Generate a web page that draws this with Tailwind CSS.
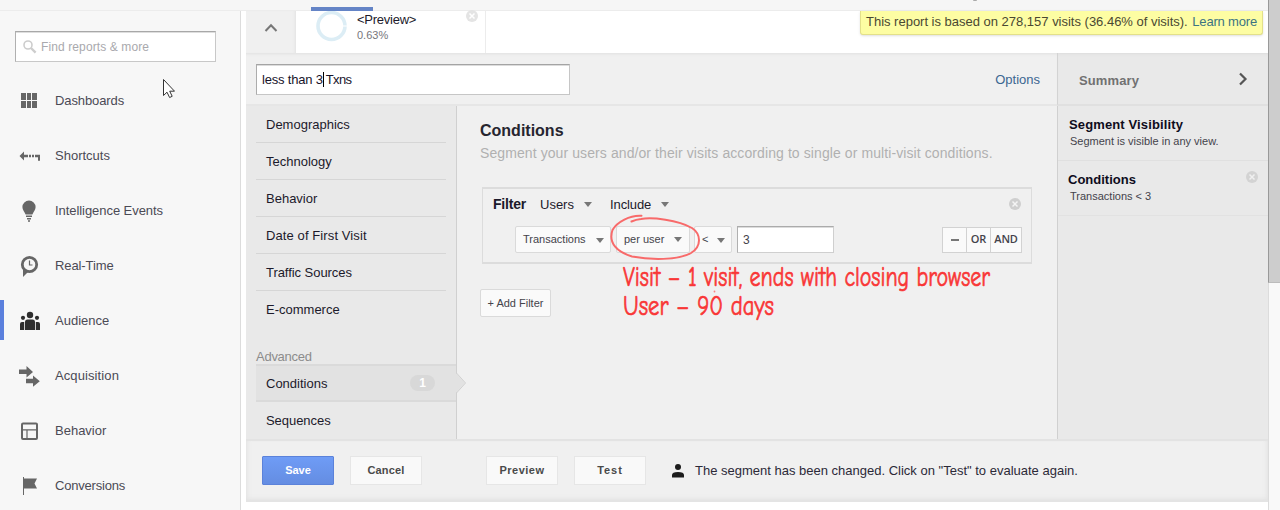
<!DOCTYPE html>
<html lang="en">
<head>
<meta charset="utf-8">
<title>Audience segments</title>
<script src="https://cdn.jsdelivr.net/npm/@tailwindcss/browser@4"></script>
</head>
<body class="relative flex h-[510px] w-[1280px] flex-col overflow-hidden bg-white font-['Liberation_Sans',Arial,sans-serif] text-[13px] leading-4 text-[#1c1a2b]">

<!-- top bar -->
<header class="flex h-[11px] w-[1268px] shrink-0 items-end border-b border-[#ececec] bg-[#f6f6f6] pl-[311px]">
  <div class="-mb-px h-1 w-[62px] bg-[#6484c6]"></div>
  <div class="mb-[9px] ml-[600px] h-px w-1 rounded-b-full bg-[#aaa]"></div>
</header>

<div class="flex min-h-0 flex-1">
  <!-- sidebar -->
  <aside class="flex w-[241px] shrink-0 flex-col border-r border-[#dcdcdc] bg-[#f7f7f7] text-[#4b4a55]">
    <div class="mt-5 ml-[15px] flex h-[31px] w-[201px] shrink-0 items-center gap-[5px] border border-[#c8c8c8] border-t-[#a8a8a8] border-l-[#b0b0b0] bg-white pl-[7px] text-xs tracking-[0.11px] text-[#a9a9ad] shadow-[inset_0_1px_0_#dedede]">
      <svg class="size-[14px]" viewBox="0 0 14 14" fill="none" stroke="#cdcdcd"><circle cx="5" cy="5" r="4" stroke-width="1.6"/><path d="M8 8l4.6 4.6" stroke-width="2.4"/></svg>
      <span class="-ml-px">Find reports &amp; more</span>
    </div>
    <nav class="mt-[11px] flex flex-col">
      <a class="flex h-[55px] items-center pl-[19px] tracking-[-0.1px]"><svg class="mr-4 size-5" viewBox="0 0 20 20" fill="#666"><path d="M2 2h5v7H2zM8 2h4v7H8zM13 2h5v7h-5zM2 10h5v7H2zM8 10h4v7H8zM13 10h5v7h-5z"/></svg>Dashboards</a>
      <a class="flex h-[55px] items-center pl-[19px]"><svg class="mr-4 size-5 overflow-visible" viewBox="0 0 20 20" fill="#666"><path d="M0.5 10L5 5.500v3.200h4v2.600H5v3.200zM10 8.700h2v2.600h-2zM13 8.700h2v2.600h-2zM16 8.700h5v6h-2v-3.400h-3z"/></svg>Shortcuts</a>
      <a class="flex h-[55px] items-center pl-[19px] tracking-[-0.06px]"><svg class="mr-4 size-5 overflow-visible" viewBox="0 0 20 20" fill="#666"><path d="M10-.5a6.600 6.600 0 0 1 6.600 6.600c0 3-2 4.500-3.200 7.400H6.600C5.400 10.600 3.400 9.100 3.400 6.100A6.600 6.600 0 0 1 10-.5zM7 14.500h6v1.500H7zM8 17h4v1.500H8zM9 19.200h2v1.500H9z"/></svg>Intelligence Events</a>
      <a class="flex h-[55px] items-center pl-[19px] tracking-[-0.1px]"><svg class="mr-4 size-5 overflow-visible" viewBox="0 0 20 20"><circle cx="10.500" cy="8.500" r="7.200" fill="none" stroke="#666" stroke-width="2.800"/><path d="M4 12v9l5-5z" fill="#666"/><path d="M10.500 4.500V9H13.500" fill="none" stroke="#666" stroke-width="1.200"/></svg>Real-Time</a>
      <a class="relative flex h-[55px] items-center pl-[19px]"><i class="absolute top-[7px] left-0 h-10 w-1 bg-[#5b80dd]"></i><svg class="mr-4 size-5 overflow-visible" viewBox="0 0 20 20" fill="#2e2e2e"><circle cx="11" cy="4" r="3.200"/><circle cx="4" cy="6.800" r="2.100"/><circle cx="18" cy="6.800" r="2.100"/><path d="M6 19v-8q0-2.500 2.500-2.500h5q2.500 0 2.500 2.500v8zM1 19v-6q0-2 2-2h2.200v8zM16.800 19v-8H19q2 0 2 2v6z"/></svg>Audience</a>
      <a class="flex h-[55px] items-center pl-[19px] tracking-[0.1px]"><svg class="mr-4 size-5 overflow-visible" viewBox="0 0 20 20" fill="#666"><path d="M0 3.500h7.500V0L14 6l-6.500 5.500V8H0zM7 12.800h7V9.500l6.800 5.700-6.800 5.600v-3.600H7z"/></svg>Acquisition</a>
      <a class="flex h-[55px] items-center pl-[19px]"><svg class="mr-4 size-5" viewBox="0 0 20 20" fill="none" stroke="#666"><rect x="3" y="2.500" width="15" height="15.500" rx="1" stroke-width="2"/><path d="M3 8.800h15M8 8.800v9" stroke-width="1.200"/></svg>Behavior</a>
      <a class="flex h-[55px] items-center pl-[19px] tracking-[-0.2px]"><svg class="mr-4 size-5" viewBox="0 0 20 20" fill="#666"><path d="M4 1h1v1.500h13L15.500 7.500 18 12.500H5V19H4z"/></svg>Conversions</a>
    </nav>
  </aside>

  <main class="ml-[5px] flex w-[1022px] shrink-0 flex-col">
    <!-- segment strip -->
    <div class="flex h-[42px] shrink-0">
      <div class="flex w-[50px] justify-center bg-[#f0f0f0] pt-[11px] shadow-[inset_-3px_0_3px_-2px_#e2e2e2]">
        <svg class="h-3 w-[14px]" viewBox="0 0 14 12" fill="none" stroke="#777" stroke-width="2"><path d="M1.500 9L7 3.200 12.500 9"/></svg>
      </div>
      <div class="flex w-[190px] border-r border-[#ececec] pl-5">
        <svg class="h-[33px] w-[31px]" viewBox="0 0 31 33" fill="none"><circle cx="15.500" cy="15" r="13.500" stroke="#dcedf5" stroke-width="3.600"/><path d="M26 15h5" stroke="#fff"/></svg>
        <div class="ml-[10px] w-[109px] leading-[15px]"><div class="mt-px tracking-[-0.25px]">&lt;Preview&gt;</div><div class="mt-px text-[11px] text-[#77767c]">0.63%</div></div>
        <svg class="-mt-px size-3" viewBox="0 0 12 12"><circle cx="6" cy="6" r="6" fill="#e4e4e4"/><path d="M3.500 3.500l5 5M8.500 3.500l-5 5" stroke="#fff" stroke-width="1.500"/></svg>
      </div>
      <div class="ml-auto mr-[5px] flex h-6 w-[403px] items-center justify-between whitespace-nowrap rounded-b-[3px] border border-t-0 border-[#e3e08a] bg-[#fdfda3] px-[5px] pb-[2px] text-[#4a4832] shadow-sm">
        <span class="tracking-[-0.01px]">This report is based on 278,157 visits (36.46% of visits).</span><span class="tracking-[-0.18px] text-[#3c7482]">Learn more</span>
      </div>
    </div>

    <!-- segment editor -->
    <section class="flex h-[449px] shrink-0 flex-col border-b-2 border-[#e4e4e4] bg-[#f0f0f0]">
      <div class="flex h-[53px] shrink-0">
        <div class="flex w-[812px] items-center justify-between border-r border-b-2 border-[#e6e6e6] border-r-[#d3d3d3] pt-px pr-[17px] pl-[10px] shadow-[inset_0_3px_3px_-2px_#e0e0e0]">
          <div class="flex h-[31px] w-[314px] items-center border border-[#c6c6c6] border-t-[#a4a4a4] border-l-[#acacac] bg-white pl-[5px] text-[#17142a] shadow-[inset_0_1px_0_#dcdcdc]">
            <span class="pt-px tracking-[-0.2px]">less than 3</span><i class="mr-[2px] h-[15px] w-px bg-black"></i><span class="pt-px tracking-[-0.6px]">Txns</span>
          </div>
          <a class="pt-px text-[#3b6690]">Options</a>
        </div>
        <div class="flex flex-1 items-center justify-between border-b-2 border-[#e0e0e0] bg-[#e9e9e9] pr-5 pl-[21px] font-bold tracking-[0.13px] text-[#717171] shadow-[inset_0_3px_3px_-2px_#dcdcdc]">
          <span class="pt-[4px]">Summary</span>
          <svg class="h-[14px] w-[10px]" viewBox="0 0 10 14" fill="none" stroke="#555" stroke-width="2.200"><path d="M2 1.500L7.500 7 2 12.500"/></svg>
        </div>
      </div>

      <div class="flex h-[333px] shrink-0">
        <!-- dimensions -->
        <nav class="flex w-[211px] flex-col border-r border-[#d0d0d0] bg-[#e9e9e9] pl-[10px]">
          <a class="mr-[10px] flex h-[37px] items-center border-b border-[#d6d6d6] pt-[2px] pl-[10px]">Demographics</a>
          <a class="mr-[10px] flex h-[37px] items-center border-b border-[#d6d6d6] pt-[2px] pl-[10px]">Technology</a>
          <a class="mr-[10px] flex h-[37px] items-center border-b border-[#d6d6d6] pt-[2px] pl-[10px]">Behavior</a>
          <a class="mr-[10px] flex h-[37px] items-center border-b border-[#d6d6d6] pt-[2px] pl-[10px] tracking-[0.1px]">Date of First Visit</a>
          <a class="mr-[10px] flex h-[37px] items-center border-b border-[#d6d6d6] pt-[2px] pl-[10px] tracking-[-0.05px]">Traffic Sources</a>
          <a class="flex h-[37px] items-center pl-[10px]">E-commerce</a>
          <div class="mt-[21px] h-[15px] tracking-[-0.26px] text-[#8c8c8c]">Advanced</div>
          <a class="relative flex h-[38px] items-center justify-between border-y-2 border-[#dadada] bg-[#e2e2e2] pr-[21px] pl-[10px]"><span class="pt-[2px]">Conditions</span>
            <span class="flex h-4 w-[25px] items-center justify-center rounded-full bg-[#d8d8d8] text-xs font-bold text-white">1</span>
            <svg class="absolute top-[7px] -right-[10px] h-5 w-[10px]" viewBox="0 0 10 20"><path d="M0 0l9 10-9 10z" fill="#e2e2e2"/><path d="M.5 0l9 10-9 10" fill="none" stroke="#d0d0d0"/></svg>
          </a>
          <a class="flex h-[37px] items-center pl-[10px] tracking-[-0.05px]">Sequences</a>
        </nav>

        <!-- conditions -->
        <div class="flex w-[601px] flex-col items-start border-r border-[#d0d0d0] pt-[15px] pl-[23px]">
          <h2 class="text-base leading-[19px] font-bold text-[#26252f]">Conditions</h2>
          <p class="mt-[4px] whitespace-nowrap text-sm leading-[18px] tracking-[0.09px] text-[#b0b0b0]">Segment your users and/or their visits according to single or multi-visit conditions.</p>
          <div class="mt-[25px] ml-[2px] h-[77px] w-[550px] border-2 border-[#dcdcdc] border-r-[1px] border-l">
            <div class="mt-[7px] flex h-4 items-center pr-[10px] pl-[10px]">
              <b class="w-[47px] text-sm tracking-[-0.2px]">Filter</b>
              <span class="w-11 pt-[2px]">Users</span><i class="mr-[18px] border-x-4 border-t-[5px] border-x-transparent border-t-[#777]"></i>
              <span class="w-[51px] pt-[2px] tracking-[-0.1px]">Include</span><i class="border-x-4 border-t-[5px] border-x-transparent border-t-[#777]"></i>
              <svg class="ml-auto size-3" viewBox="0 0 12 12"><circle cx="6" cy="6" r="6" fill="#cfcfcf"/><path d="M3.500 3.500l5 5M8.500 3.500l-5 5" stroke="#f4f4f4" stroke-width="1.500"/></svg>
            </div>
            <div class="mt-[14px] flex h-[27px] items-center pr-[9px] pl-8 text-[11px] text-[#44434b]">
              <span class="flex h-[27px] w-[96px] items-center justify-between rounded-[2px] border border-[#dadada] bg-[#fafafa] px-[7px] pb-px">Transactions<i class="mt-[3px] -mr-px border-x-4 border-t-[5px] border-x-transparent border-t-[#777]"></i></span>
              <span class="ml-[5px] flex h-[27px] w-[74px] items-center justify-between rounded-[2px] border border-[#dadada] bg-[#fafafa] px-[7px] pb-px">per user<i class="border-x-4 border-t-[5px] border-x-transparent border-t-[#777]"></i></span>
              <span class="ml-[4px] flex h-[27px] w-[38px] items-center justify-between rounded-[2px] border border-[#dadada] bg-[#fafafa] px-[7px] pr-[6px] pb-px">&lt;<i class="mt-[2px] border-x-4 border-t-[5px] border-x-transparent border-t-[#777]"></i></span>
              <span class="ml-[5px] flex h-[27px] w-[97px] items-center border border-[#cfcfcf] border-t-[#ababab] border-l-[#b0b0b0] bg-white pl-[5px] text-xs shadow-[inset_0_1px_0_#dcdcdc]">3</span>
              <div class="ml-auto flex h-[26px] w-[80px] divide-x divide-[#d2d2d2] border border-[#d2d2d2] bg-[#fafafa] font-bold">
                <span class="flex w-6 items-center justify-center"><i class="h-[2px] w-2 bg-[#777]"></i></span>
                <span class="flex w-6 items-center justify-center pb-px font-['Open_Sans',sans-serif] font-semibold">OR</span>
                <span class="flex flex-1 items-center justify-center pb-px font-['Open_Sans',sans-serif] font-semibold tracking-[-0.2px]">AND</span>
              </div>
            </div>
          </div>
          <button class="mt-[25px] flex h-[28px] w-[71px] items-center justify-center rounded-[2px] border border-[#dadada] bg-[#fafafa] text-[11px] whitespace-nowrap text-[#44434b]">+ Add Filter</button>
        </div>

        <!-- summary -->
        <div class="flex flex-1 flex-col bg-[#e9e9e9]">
          <div class="h-[55px] border-b border-[#e0e0e0] pt-[11px] pl-[11px]">
            <div class="font-bold tracking-[0.13px] whitespace-nowrap text-[#0e0c1c]">Segment Visibility</div>
            <div class="pl-px text-[11px] whitespace-nowrap text-[#44434b]">Segment is visible in any view.</div>
          </div>
          <div class="flex h-[55px] justify-between border-b border-[#e2e2e2] pt-[11px] pr-[10px] pl-[10px]">
            <div><div class="font-bold text-[#0e0c1c]">Conditions</div><div class="pl-[2px] text-[11px] text-[#44434b]">Transactions &lt; 3</div></div>
            <svg class="-mt-px size-3" viewBox="0 0 12 12"><circle cx="6" cy="6" r="6" fill="#d3d3d3"/><path d="M3.500 3.500l5 5M8.500 3.500l-5 5" stroke="#f0f0f0" stroke-width="1.500"/></svg>
          </div>
        </div>
      </div>

      <!-- actions -->
      <footer class="flex flex-1 items-center border-t-2 border-[#e3e3e3] pl-[16px] text-[11px] font-bold text-[#4a4a4a] shadow-[inset_0_-5px_5px_-4px_#e2e2e2,inset_5px_0_5px_-4px_#e2e2e2,inset_-5px_0_5px_-4px_#e2e2e2]">
        <button class="flex h-[29px] w-[72px] items-center justify-center rounded-[1px] border border-[#5b82da] bg-linear-to-b from-[#6f9cf6] to-[#648de2] pb-px text-white">Save</button>
        <button class="ml-4 flex h-[29px] w-[72px] items-center justify-center border border-[#e6e6e6] bg-[#f9f9f9] pb-px tracking-[0.19px]">Cancel</button>
        <button class="ml-16 flex h-[29px] w-[72px] items-center justify-center border border-[#e6e6e6] bg-[#f9f9f9] pb-px tracking-[0.5px]">Preview</button>
        <button class="ml-4 flex h-[29px] w-[72px] items-center justify-center border border-[#e6e6e6] bg-[#f9f9f9] pb-px tracking-[0.9px]">Test</button>
        <svg class="ml-[26px] h-[14px] w-3" viewBox="0 0 12 14" fill="#1c1c1c"><circle cx="6" cy="3" r="3"/><path d="M0 13.500v-2.500q0-3 6-3t6 3v2.500z"/></svg>
        <span class="ml-[11px] text-[13px] font-normal text-[#2c2a38]">The segment has been changed. Click on "Test" to evaluate again.</span>
      </footer>
    </section>
  </main>
</div>

<!-- page scrollbar -->
<div class="absolute top-0 right-0 h-full w-3 border-l border-[#dcdcdc] bg-[#f9f9f9]"><div class="-ml-px h-[283px] border-b border-l border-[#bcbcbc] border-l-[#999] bg-[#cdcdcd]"></div></div>

<!-- red annotations -->
<svg class="pointer-events-none absolute top-0 left-0 h-[510px] w-[1280px]" viewBox="0 0 1280 510">
  <path d="M641.500 215.800C630 215 617 222 612.500 230C608 243 617 252 632 256.500C650 260 678 260.500 691 253C702 246 701 234 692 228C678 220 652 217 641 219Q636 219.500 631.500 221.500" fill="none" stroke="#f86a6a" stroke-width="2" stroke-linecap="round"/>
  <g fill="#f93636" stroke="#f93636" stroke-width=".7" font-family="'Comic Neue','Liberation Sans',cursive" font-size="29">
    <text x="623" y="286" textLength="367" lengthAdjust="spacingAndGlyphs">Visit – 1 visit, ends with closing browser</text>
    <text x="623" y="315" textLength="151" lengthAdjust="spacingAndGlyphs">User – 90 days</text>
  </g>
  <circle cx="714.500" cy="291.500" r=".9" fill="#f98080"/>
</svg>

<!-- mouse pointer -->
<svg class="absolute top-[79px] left-[163px] h-5 w-3" viewBox="0 0 12 20"><path d="M.5.5v16l3.500-3.300 2.600 5.300 2.600-1.200-2.500-5.100h4.800z" fill="#fff" stroke="#333"/></svg>
</body>
</html>
